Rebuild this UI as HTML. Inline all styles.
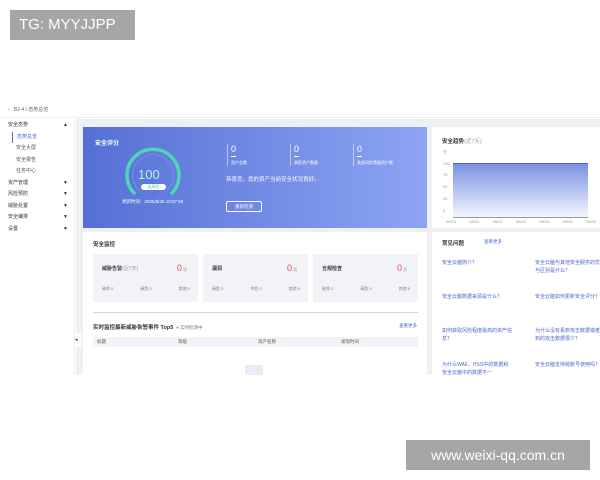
<!DOCTYPE html>
<html><head><meta charset="utf-8"><style>
*{margin:0;padding:0;box-sizing:border-box}
body{width:600px;height:480px;background:#fff;position:relative;overflow:hidden;font-family:"Liberation Sans","Noto Sans CJK SC",sans-serif;font-size:5px;color:#333}
.a{position:absolute}
.tg{left:10px;top:10px;width:125px;height:30px;background:#a6a6a6;color:#fff;font-size:15px;line-height:30px;padding-left:9px}
.wm{left:406px;top:440px;width:184px;height:30px;background:#a6a6a6;color:#fff;font-size:14px;line-height:30px;text-align:center}
.side div{height:11.5px;line-height:11.5px;padding-left:8px;position:relative}
.side div.s{padding-left:16px;color:#555}
.arr{position:absolute;right:6px;top:0;font-size:5px}
.card{background:#fff}
.sm{background:#f2f3f6;position:absolute;top:254px;width:105px;height:48px}
.red{color:#e34d59}
.faq{position:absolute;color:#4b67c9;font-size:5px;line-height:8px;width:70px}
.st{position:absolute;border-left:1px solid rgba(255,255,255,.5);padding-left:3px}
</style></head><body>
<div class="a tg">TG: MYYJJPP</div>
<div class="a wm">www.weixi-qq.com.cn</div>

<div class="a" style="left:0;top:103px;width:600px;height:15px;border-bottom:1px solid #eee;font-size:5px;line-height:15px;padding-left:8px;color:#666">‹ &nbsp; BJ-4 / 态势总览</div>
<div class="a side" style="left:0;top:120px;width:75px;height:255px;background:#fff;border-right:1px solid #eee">
<div>安全态势<span class="arr">▲</span></div>
<div class="s" style="color:#4b67c9;border-left:1px solid #4b67c9;margin-left:12px;padding-left:4px">态势总览</div>
<div class="s">安全大屏</div><div class="s">安全报告</div><div class="s">任务中心</div>
<div>资产管理<span class="arr">▼</span></div><div>风险预防<span class="arr">▼</span></div>
<div>威胁处置<span class="arr">▼</span></div><div>安全编排<span class="arr">▼</span></div><div>设置<span class="arr">▼</span></div>
</div>
<div class="a" style="left:76px;top:119px;width:524px;height:256px;background:#eef0f4"></div>
<div class="a" style="left:75px;top:333px;width:6px;height:14px;background:#fff;font-size:5px;line-height:14px">◂</div>

<div class="a" style="left:83px;top:127px;width:344px;height:101px;background:linear-gradient(90deg,#5470d4,#8da4f3);color:#fff">
<div class="a" style="left:12px;top:11px;font-size:6px;font-weight:bold">安全评分</div>
<svg class="a" style="left:39px;top:18px" width="62" height="56" viewBox="0 0 62 56"><path d="M13 49 A26 26 0 1 1 49 49" fill="none" stroke="#4fd6b5" stroke-width="3.5"/><path d="M17 45 A20.5 20.5 0 1 1 45 45" fill="none" stroke="#fff" stroke-width="0.6" stroke-dasharray="1 1.5" opacity=".6"/></svg>
<div class="a" style="left:55px;top:40px;font-size:13px;color:#b6f0e3">100</div>
<div class="a" style="left:58px;top:57px;width:25px;height:6px;border-radius:3px;background:#fff;color:#3ab79a;font-size:4px;line-height:6px;text-align:center">无风险</div>
<div class="a" style="left:39px;top:72px;font-size:4.5px">更新时间：2025/8/25 10:07:58</div>
<div class="st" style="left:144px;top:17px"><div style="font-size:9px;line-height:10px">0</div><div style="width:5px;height:1px;background:#fff;margin:2px 0 3px"></div><div style="font-size:4px">资产总数</div></div>
<div class="st" style="left:207px;top:17px"><div style="font-size:9px;line-height:10px">0</div><div style="width:5px;height:1px;background:#fff;margin:2px 0 3px"></div><div style="font-size:4px">高危资产数量</div></div>
<div class="st" style="left:270px;top:17px"><div style="font-size:9px;line-height:10px">0</div><div style="width:5px;height:1px;background:#fff;margin:2px 0 3px"></div><div style="font-size:4px">其他风险等级资产数</div></div>
<div class="a" style="left:143px;top:48px;font-size:5.5px">恭喜您，您的资产当前安全状况良好。</div>
<div class="a" style="left:143px;top:74px;width:36px;height:11px;border:1px solid #fff;border-radius:2px;font-size:4.5px;line-height:9px;text-align:center">重新检测</div>
</div>

<div class="a card" style="left:432px;top:127px;width:168px;height:101px">
<div class="a" style="left:10px;top:10px;font-size:5.5px;font-weight:bold">安全趋势<span style="font-weight:normal;color:#999">(近7天)</span></div>
<div class="a" style="left:11px;top:19px;font-size:4px;color:#999;line-height:11.7px">分<br>100<br>75<br>50<br>25<br>0</div>
<div class="a" style="left:21px;top:36px;width:135px;height:54px;background:linear-gradient(#7b92e2,#f3f5fe);border-top:1px solid #4b67c9"></div>
<div class="a" style="left:21px;top:90px;width:135px;height:1px;background:#999"></div>
<div class="a" style="left:14px;top:92px;width:150px;font-size:4px;color:#999;display:flex;justify-content:space-between"><span>08/19</span><span>08/20</span><span>08/21</span><span>08/22</span><span>08/23</span><span>08/24</span><span>08/25</span></div>
</div>

<div class="a card" style="left:83px;top:232px;width:344px;height:143px"></div>
<div class="a" style="left:93px;top:240px;font-size:5.5px;font-weight:bold">安全监控</div>
<div class="sm" style="left:93px"><div class="a" style="left:9px;top:11px;font-weight:bold">威胁告警<span style="font-weight:normal;color:#999">(近7天)</span></div><div class="a red" style="left:84px;top:9px;font-size:9px">0<span style="font-size:4px;color:#999"> 项</span></div><div class="a" style="left:9px;top:32px;width:88px;display:flex;justify-content:space-between;color:#777;font-size:4px"><span>致命 0</span><span>高危 0</span><span>其他 0</span></div></div>
<div class="sm" style="left:203px"><div class="a" style="left:9px;top:11px;font-weight:bold">漏洞</div><div class="a red" style="left:84px;top:9px;font-size:9px">0<span style="font-size:4px;color:#999"> 项</span></div><div class="a" style="left:9px;top:32px;width:88px;display:flex;justify-content:space-between;color:#777;font-size:4px"><span>高危 0</span><span>中危 0</span><span>其他 0</span></div></div>
<div class="sm" style="left:313px"><div class="a" style="left:9px;top:11px;font-weight:bold">合规检查</div><div class="a red" style="left:84px;top:9px;font-size:9px">0<span style="font-size:4px;color:#999"> 项</span></div><div class="a" style="left:9px;top:32px;width:88px;display:flex;justify-content:space-between;color:#777;font-size:4px"><span>致命 0</span><span>高危 0</span><span>其他 0</span></div></div>
<div class="a" style="left:93px;top:312px;width:325px;height:1px;background:#c9d3ec"></div>
<div class="a" style="left:93px;top:323px;font-size:5.5px;font-weight:bold">实时监控最新威胁告警事件 Top5 <span style="font-weight:normal;font-size:4.5px;color:#777">&nbsp;<span style="color:#3ab79a">●</span> 实时检测中</span></div>
<div class="a" style="left:399px;top:323px;font-size:4.5px;color:#4b67c9">查看更多</div>
<div class="a" style="left:93px;top:337px;width:325px;height:10px;background:#f2f3f6;font-size:4.5px;line-height:10px;color:#555"><span class="a" style="left:4px">标题</span><span class="a" style="left:85px">等级</span><span class="a" style="left:165px">资产名称</span><span class="a" style="left:248px">发现时间</span></div>
<div class="a" style="left:245px;top:365px;width:18px;height:10px;background:#e8ecf7"></div>

<div class="a card" style="left:432px;top:232px;width:168px;height:143px">
<div class="a" style="left:10px;top:7px;font-size:5.5px;font-weight:bold">常见问题</div>
<div class="a" style="left:52px;top:7px;font-size:4.5px;color:#4b67c9">查看更多</div>
<div class="faq" style="left:10px;top:27px">安全云脑简介？</div>
<div class="faq" style="left:103px;top:27px">安全云脑与其他安全服务的优势与区别是什么？</div>
<div class="faq" style="left:10px;top:61px">安全云脑数据来源是什么？</div>
<div class="faq" style="left:103px;top:61px">安全云脑如何更新安全评分？</div>
<div class="faq" style="left:10px;top:95px">如何获取风险程度最高的资产信息？</div>
<div class="faq" style="left:103px;top:95px">为什么没有看到攻击数据或者看到的攻击数据很少？</div>
<div class="faq" style="left:10px;top:129px">为什么WAF、HSS中的数据和安全云脑中的数据不一</div>
<div class="faq" style="left:103px;top:129px">安全云脑支持跨账号使用吗？</div>
</div>
</body></html>
